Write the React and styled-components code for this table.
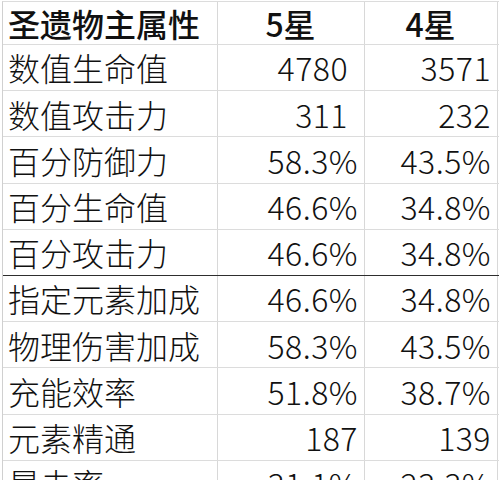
import React from "react";
import styled, { createGlobalStyle } from "styled-components";

const GlobalStyle = createGlobalStyle`
  html, body {
    margin: 0;
    padding: 0;
    background: #ffffff;
  }
  body {
    width: 500px;
    height: 480px;
    overflow: hidden;
    font-family: "Noto Sans CJK SC", "Noto Sans", sans-serif;
    color: #111;
  }
`;

const Sheet = styled.div`
  margin: 1px 0 0 2px;
  width: 496px;
  border-top: 1px solid #dcdcdc;
  border-left: 1px solid #d0d0d0;
`;

const Row = styled.div`
  display: grid;
  grid-template-columns: 215px 147px 133px;
  box-sizing: border-box;
  height: ${({ $head }) => ($head ? "43px" : "46.2px")};
  border-bottom: 1px solid ${({ $thick }) => ($thick ? "#2e2e2e" : "#dcdcdc")};
`;

const Cell = styled.div`
  display: flex;
  align-items: center;
  justify-content: ${({ $align }) =>
    $align === "right" ? "flex-end" : $align === "center" ? "center" : "flex-start"};
  box-sizing: border-box;
  padding: 0 ${({ $pr }) => $pr ?? 6}px 0 5px;
  border-right: 1px solid #d8d8d8;
  font-size: 32px;
  font-weight: ${({ $bold }) => ($bold ? 500 : 300)};
  line-height: 1.2;
  white-space: nowrap;
  letter-spacing: ${({ $num }) => ($num ? "0.5px" : "0")};
`;

const rows = [
  { name: "数值生命值", five: "4780", four: "3571", pad: 16 },
  { name: "数值攻击力", five: "311", four: "232", pad: 16 },
  { name: "百分防御力", five: "58.3%", four: "43.5%" },
  { name: "百分生命值", five: "46.6%", four: "34.8%" },
  { name: "百分攻击力", five: "46.6%", four: "34.8%", thick: true },
  { name: "指定元素加成", five: "46.6%", four: "34.8%" },
  { name: "物理伤害加成", five: "58.3%", four: "43.5%" },
  { name: "充能效率", five: "51.8%", four: "38.7%" },
  { name: "元素精通", five: "187", four: "139" },
  { name: "暴击率", five: "31.1%", four: "23.3%" },
];

export default function App() {
  return (
    <>
      <GlobalStyle />
      <Sheet>
        <Row $head>
          <Cell $bold>圣遗物主属性</Cell>
          <Cell $bold $align="center">5星</Cell>
          <Cell $bold $align="center">4星</Cell>
        </Row>
        {rows.map((r) => (
          <Row key={r.name} $thick={r.thick}>
            <Cell>{r.name}</Cell>
            <Cell $align="right" $num $pr={r.pad}>{r.five}</Cell>
            <Cell $align="right" $num>{r.four}</Cell>
          </Row>
        ))}
      </Sheet>
    </>
  );
}
